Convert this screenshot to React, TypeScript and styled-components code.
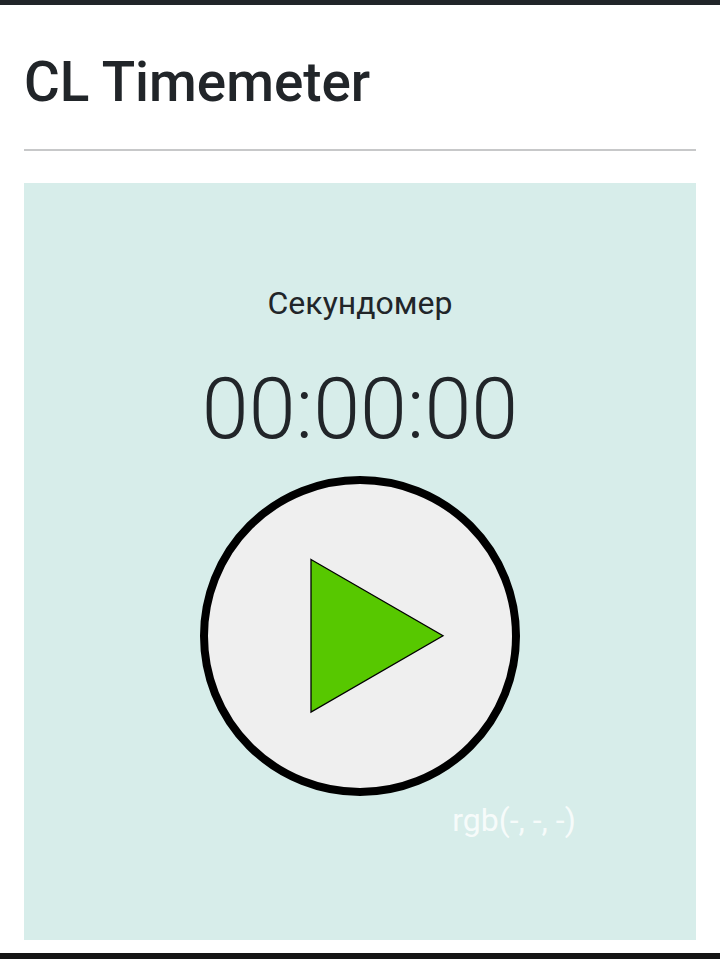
import React from "react";
import styled, { createGlobalStyle } from "styled-components";

const GlobalStyle = createGlobalStyle`
  * { box-sizing: border-box; }
  body { margin: 0; background: #fff; color: #212529; font-family: Roboto, sans-serif; overflow: hidden; }
`;
const Page = styled.div`
  height: 959px;
  display: flex;
  flex-direction: column;
  border-top: 5px solid #212529;
  border-bottom: 6px solid #151515;
  padding: 0 24px;
`;
const Title = styled.h1`
  margin: 44px 0 0;
  font-size: 54.8px;
  line-height: 66px;
  font-weight: 500;
`;
const Divider = styled.hr`
  width: 100%;
  margin: 34px 0 32px;
  border: 0;
  height: 2px;
  background: #c7c8c9;
`;
const Panel = styled.main`
  height: 757px;
  background: #d7edea;
  display: flex;
  flex-direction: column;
  align-items: center;
  padding-top: 96px;
`;
const Label = styled.div`
  font-size: 32px;
  line-height: 48px;
`;
const Time = styled.div`
  margin-top: 32px;
  font-size: 84.4px;
  line-height: 101px;
  font-weight: 300;
`;
const PlayButton = styled.button`
  margin-top: 16px;
  width: 320px;
  height: 320px;
  flex: none;
  padding: 0;
  border: 8px solid #000;
  border-radius: 50%;
  background: #efefef;
  svg { display: block; }
`;
const ColorReadout = styled.output`
  margin-left: 308px;
  font-size: 32px;
  line-height: 48px;
  color: rgba(255, 255, 255, 0.8);
`;

export default function App() {
  return (
    <>
      <GlobalStyle />
      <Page>
        <Title>CL Timemeter</Title>
        <Divider />
        <Panel>
          <Label>Секундомер</Label>
          <Time>00:00:00</Time>
          <PlayButton aria-label="Старт">
            <svg width="304" height="304" viewBox="0 0 304 304">
              <path d="M103 75.5 L235 151.7 L103 228 Z" fill="#57c800" stroke="#000" strokeWidth="1.3" />
            </svg>
          </PlayButton>
          <ColorReadout>rgb(-, -, -)</ColorReadout>
        </Panel>
      </Page>
    </>
  );
}
